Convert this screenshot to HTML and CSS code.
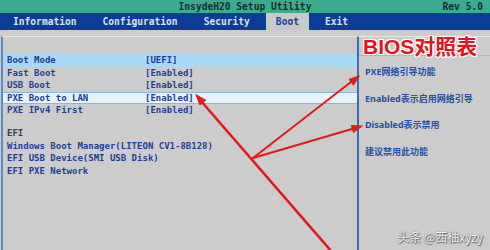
FILE: index.html
```html
<!DOCTYPE html>
<html lang="zh-CN">
<head>
    <meta charset="UTF-8">
    <meta name="viewport" content="width=device-width, initial-scale=1.0">
    <title>InsydeH20 Setup Utility</title>
    <link rel="stylesheet" href="styles.css">
</head>
<body>
    <div class="titlebar">
        <span></span>
        <span class="title">InsydeH20 Setup Utility</span>
        <span class="rev">Rev 5.0</span>
    </div>
    <nav class="tabs">
        <span class="tab">Information</span>
        <span class="tab">Configuration</span>
        <span class="tab">Security</span>
        <span class="tab active">Boot</span>
        <span class="tab">Exit</span>
    </nav>
    <div class="main">
        <div class="panel">
            <div class="panel-head"></div>
            <div class="row sel"><span>Boot Mode</span><span>[UEFI]</span></div>
            <div class="row"><span>Fast Boot</span><span>[Enabled]</span></div>
            <div class="row"><span>USB Boot</span><span>[Enabled]</span></div>
            <div class="row focus"><span>PXE Boot to LAN</span><span>[Enabled]</span></div>
            <div class="row"><span>PXE IPv4 First</span><span>[Enabled]</span></div>
            <div class="spacer"></div>
            <div class="row group"><span>EFI</span></div>
            <div class="row"><span class="wide">Windows Boot Manager(LITEON CV1-8B128)</span></div>
            <div class="row"><span class="wide">EFI USB Device(SMI USB Disk)</span></div>
            <div class="row"><span class="wide">EFI PXE Network</span></div>
        </div>
        <aside class="help">
            <div class="help-head">BIOS对照表</div>
            <div class="help-body">
                <p>PXE网络引导功能</p>
                <p>Enabled表示启用网络引导</p>
                <p>Disabled表示禁用</p>
                <p>建议禁用此功能</p>
            </div>
        </aside>
    </div>

    <!-- annotation arrows drawn over the screen -->
    <svg class="arrows" width="490" height="250" viewBox="0 0 490 250">
        <g fill="#e11a1a" stroke="#e11a1a" stroke-linecap="round">
            <line x1="201" y1="101" x2="332" y2="252" stroke-width="2.6"/>
            <polygon points="196,95 200,105 205.5,100.3" stroke-width="1"/>
            <line x1="253" y1="158" x2="351" y2="82" stroke-width="2"/>
            <polygon points="359,76 349,79.3 353.3,84.9" stroke-width="1"/>
            <line x1="253" y1="158" x2="352" y2="129" stroke-width="2"/>
            <polygon points="362,126 351.4,125.5 353.4,132.2" stroke-width="1"/>
        </g>
    </svg>
    <div class="watermark">头条 @西柚xyzy</div>
</body>
</html>
```

FILE: styles.css
```css
body {
    margin: 0;
    width: 490px;
    height: 250px;
    overflow: hidden;
    position: relative;
    background: #cccccc;
    font-family: "DejaVu Sans Mono", "Liberation Mono", monospace;
}
.titlebar {
    height: 13px;
    background: #3caa8c;
    display: grid;
    grid-template-columns: 1fr auto 1fr;
    font-size: 9.6px;
    font-weight: bold;
    line-height: 13px;
    color: #15302a;
}
.titlebar .rev {
    justify-self: end;
    padding-right: 7px;
}
.tabs {
    height: 17px;
    background: #0a3c98;
    display: flex;
    gap: 6px;
    padding-left: 3px;
    font-size: 9.6px;
    font-weight: bold;
    line-height: 17px;
    color: #dde2ee;
}
.tab {
    padding: 0 10px;
}
.tab.active {
    background: #c9c9c9;
    color: #1b3f9c;
}
.main {
    display: flex;
    height: 220px;
    padding-top: 6px;
    padding-left: 1px;
    box-sizing: border-box;
}
.panel {
    width: 354px;
    border-left: 2px solid #5b8bc5;
    border-top: 1px solid #e4e6e9;
    font-size: 9px;
    font-weight: bold;
    color: #1d3f95;
}
.panel-head {
    height: 17px;
}
.row {
    display: grid;
    grid-template-columns: 138px 1fr;
    height: 12.5px;
    line-height: 12.5px;
    padding-left: 4px;
    white-space: nowrap;
}
.row .wide {
    grid-column: 1 / 3;
}
.row.sel {
    background: #a9d8f6;
}
.row.focus {
    background: #e5f3fd;
    border-top: 1px solid #8ab4d8;
    border-bottom: 1px solid #8ab4d8;
    box-sizing: border-box;
    line-height: 10.5px;
}
.row.group {
    color: #34424f;
}
.spacer {
    height: 10.5px;
}
.help {
    flex: 1;
    border-left: 2px solid #3b6cc0;
    border-top: 1px solid #e4e6e9;
}
.help-head {
    height: 18px;
    border-bottom: 1px solid #aeb6c0;
    padding-left: 4px;
    font-family: "Liberation Sans", "Noto Sans CJK SC", sans-serif;
    font-size: 21px;
    font-weight: bold;
    line-height: 19px;
    color: #e3141c;
    white-space: nowrap;
    text-shadow: 1px 0 0 #fff, -1px 0 0 #fff, 0 1px 0 #fff, 0 -1px 0 #fff,
        1px 1px 0 #fff, -1px -1px 0 #fff, 1px -1px 0 #fff, -1px 1px 0 #fff;
}
.help-body {
    padding-top: 10px;
    padding-left: 6px;
}
.help p {
    margin: 0 0 14.7px;
    font-family: "Noto Sans", "Noto Sans CJK SC", sans-serif;
    font-size: 9px;
    font-weight: bold;
    line-height: 12px;
    color: #2350a8;
    white-space: nowrap;
}
.arrows {
    position: absolute;
    top: 0;
    left: 0;
    pointer-events: none;
}
.watermark {
    position: absolute;
    right: 7px;
    bottom: 5px;
    font-family: "Noto Sans CJK SC", sans-serif;
    font-size: 12px;
    color: #f6f6f6;
    text-shadow: 0 0 1px #444, 1px 1px 1px #666;
}
```
